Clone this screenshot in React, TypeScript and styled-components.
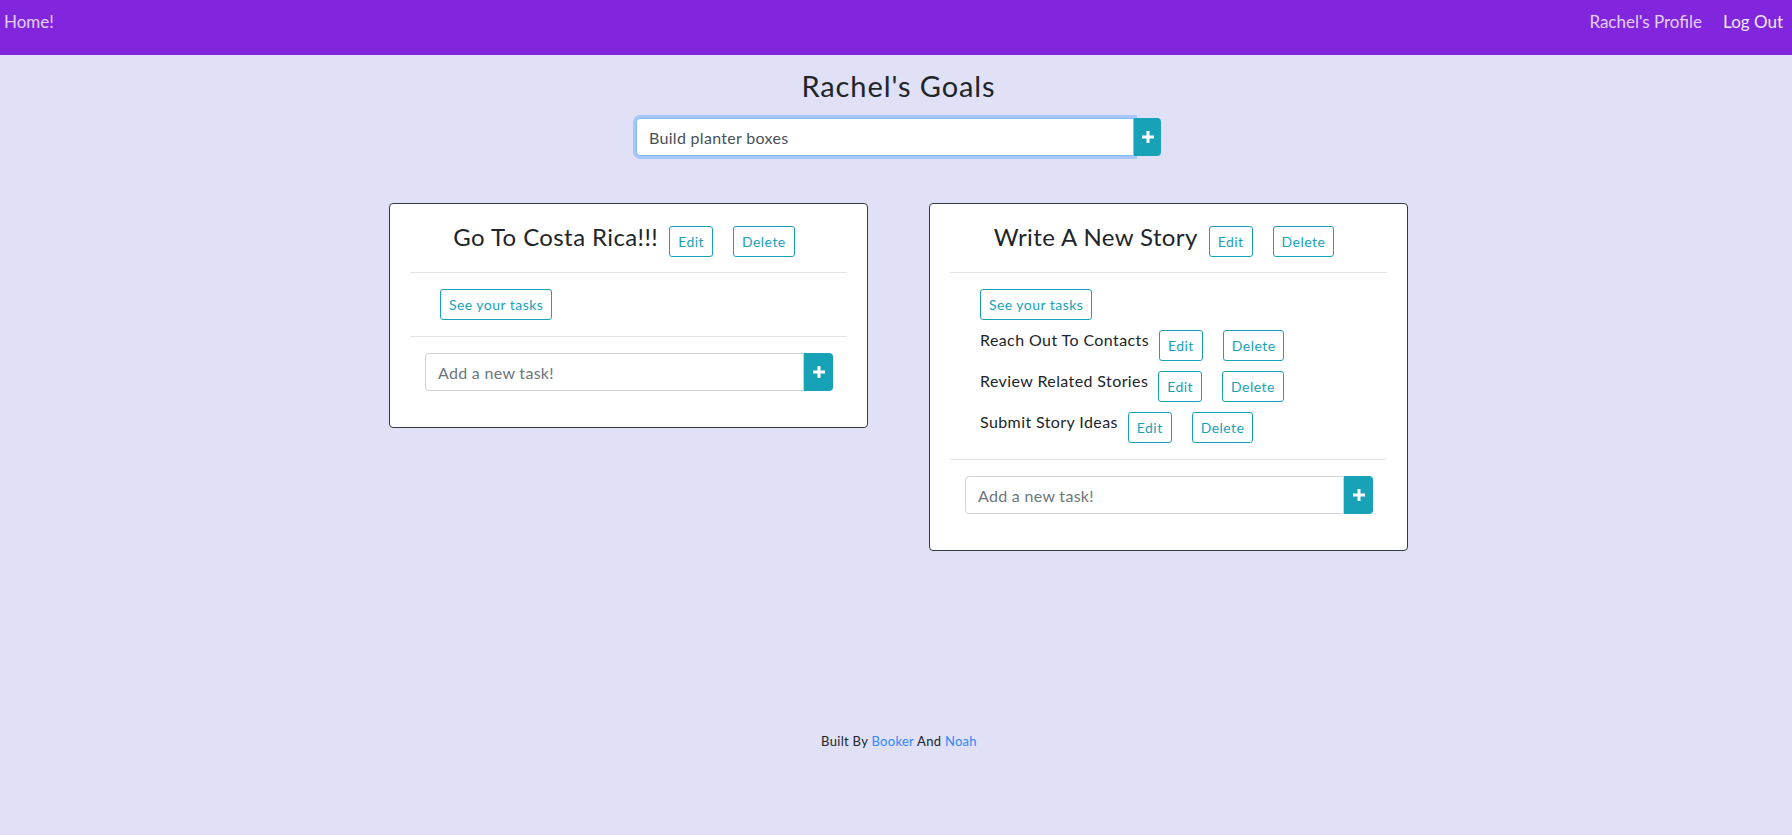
import React, { useEffect, useRef } from "react";
import styled, { createGlobalStyle } from "styled-components";

const GlobalStyle = createGlobalStyle`
  * { box-sizing: border-box; }
  body {
    margin: 0;
    background: #e0e1f7;
    font-family: Lato, "Open Sans", sans-serif;
    color: #212529;
  }
`;

const Page = styled.div`
  min-height: 835px;
  display: flex;
  flex-direction: column;
`;

const NavBar = styled.nav`
  height: 55px;
  background: #8226dd;
  display: flex;
  justify-content: space-between;
  align-items: flex-start;
  padding: 11px 9px 0 4px;
`;

const NavGroup = styled.div`
  display: flex;
  gap: 21px;
`;

const NavLink = styled.a<{ $bright?: boolean }>`
  font-size: 17px;
  line-height: 22px;
  color: ${(p) => (p.$bright ? "rgba(255,255,255,0.92)" : "rgba(255,255,255,0.8)")};
  text-decoration: none;
  cursor: pointer;
`;

const Header = styled.header`
  display: flex;
  flex-direction: column;
  align-items: center;
  padding-left: 5px;
  padding-top: 14px;
`;

const Title = styled.h1`
  margin: 0 0 15px;
  font-size: 29px;
  font-weight: 400;
  line-height: 34px;
  letter-spacing: 0.9px;
`;

const InputGroup = styled.div<{ $width: number }>`
  display: flex;
  width: ${(p) => p.$width}px;
  height: 38px;
`;

const TextInput = styled.input<{ $focused?: boolean }>`
  flex: 1;
  min-width: 0;
  height: 100%;
  padding: 6px 12px;
  font-family: inherit;
  font-size: 16px;
  letter-spacing: 0.3px;
  color: #495057;
  background: #fff;
  border: 1px solid ${(p) => (p.$focused ? "#80bdff" : "#ced4da")};
  border-radius: 4px 0 0 4px;
  outline: none;
  box-shadow: ${(p) => (p.$focused ? "0 0 0 3px rgba(0,123,255,0.25)" : "none")};
  caret-color: #212529;
  &::placeholder {
    color: #6c757d;
  }
`;

const AddButton = styled.button<{ $width: number }>`
  width: ${(p) => p.$width}px;
  height: 100%;
  border: none;
  background: #17a2b8;
  color: #fff;
  border-radius: 0 4px 4px 0;
  display: flex;
  align-items: center;
  justify-content: center;
  padding: 0;
  cursor: pointer;
`;

const Cards = styled.main`
  display: flex;
  justify-content: center;
  align-items: flex-start;
  gap: 61px;
  padding-left: 5px;
  margin-top: 47px;
`;

const Card = styled.section`
  width: 479px;
  background: #fff;
  border: 1px solid #343a40;
  border-radius: 4px;
  padding: 22px 20px 36px;
  display: flex;
  flex-direction: column;
`;

const CardHead = styled.div`
  display: flex;
  justify-content: center;
  align-items: center;
  padding-right: 9px;
  padding-bottom: 15px;
`;

const CardTitle = styled.h2`
  margin: 0 11px 0 0;
  font-size: 24px;
  font-weight: 400;
  line-height: 29px;
  letter-spacing: 0.4px;
  position: relative;
  top: -5px;
`;

const Rule = styled.hr`
  margin: 0;
  border: 0;
  border-top: 1px solid rgba(0, 0, 0, 0.1);
`;

const OutlineBtn = styled.button<{ $gap?: number }>`
  height: 31px;
  padding: 0 8px;
  margin-right: ${(p) => p.$gap ?? 0}px;
  border: 1px solid #17a2b8;
  background: transparent;
  color: #17a2b8;
  border-radius: 3px;
  font-family: inherit;
  font-size: 14px;
  letter-spacing: 0.45px;
  cursor: pointer;
  flex-shrink: 0;
`;

const TaskArea = styled.div`
  display: flex;
  flex-direction: column;
  align-items: flex-start;
  gap: 10px;
  padding: 16px 30px 16px;
`;

const TaskRow = styled.div`
  display: flex;
  align-items: flex-start;
`;

const TaskName = styled.span`
  font-size: 16px;
  line-height: 20px;
  letter-spacing: 0.4px;
  margin-right: 10px;
`;

const CardInputWrap = styled.div`
  padding: 16px 15px 0 15px;
`;

const Footer = styled.footer`
  margin-top: 181px;
  text-align: center;
  padding-left: 6px;
  font-size: 13px;
  line-height: 18px;
  letter-spacing: 0.3px;
`;

const FootLink = styled.a`
  color: #2f86ff;
  text-decoration: none;
`;

const Plus = () => (
  <svg width="12" height="12" viewBox="0 0 12 12">
    <path d="M4.5 0h3v4.5H12v3H7.5V12h-3V7.5H0v-3h4.5z" fill="#fff" />
  </svg>
);

type Goal = { title: string; tasks: string[] };

const goals: Goal[] = [
  { title: "Go To Costa Rica!!!", tasks: [] },
  {
    title: "Write A New Story",
    tasks: ["Reach Out To Contacts", "Review Related Stories", "Submit Story Ideas"],
  },
];

const GoalCard = ({ goal }: { goal: Goal }) => (
  <Card>
    <CardHead>
      <CardTitle>{goal.title}</CardTitle>
      <OutlineBtn $gap={20}>Edit</OutlineBtn>
      <OutlineBtn>Delete</OutlineBtn>
    </CardHead>
    <Rule />
    <TaskArea>
      <OutlineBtn>See your tasks</OutlineBtn>
      {goal.tasks.map((t) => (
        <TaskRow key={t}>
          <TaskName>{t}</TaskName>
          <OutlineBtn $gap={20}>Edit</OutlineBtn>
          <OutlineBtn>Delete</OutlineBtn>
        </TaskRow>
      ))}
    </TaskArea>
    <Rule />
    <CardInputWrap>
      <InputGroup $width={408}>
        <TextInput placeholder="Add a new task!" />
        <AddButton $width={29}>
          <Plus />
        </AddButton>
      </InputGroup>
    </CardInputWrap>
  </Card>
);

export default function App() {
  const ref = useRef<HTMLInputElement>(null);
  useEffect(() => {
    const el = ref.current;
    if (el) {
      el.focus();
      el.setSelectionRange(5, 5);
    }
  }, []);
  return (
    <Page>
      <GlobalStyle />
      <NavBar>
        <NavLink>Home!</NavLink>
        <NavGroup>
          <NavLink>Rachel's Profile</NavLink>
          <NavLink $bright>Log Out</NavLink>
        </NavGroup>
      </NavBar>
      <Header>
        <Title>Rachel's Goals</Title>
        <InputGroup $width={525}>
          <TextInput ref={ref} $focused defaultValue="Build planter boxes" />
          <AddButton $width={27}>
            <Plus />
          </AddButton>
        </InputGroup>
      </Header>
      <Cards>
        {goals.map((g) => (
          <GoalCard key={g.title} goal={g} />
        ))}
      </Cards>
      <Footer>
        Built By <FootLink>Booker</FootLink> And <FootLink>Noah</FootLink>
      </Footer>
    </Page>
  );
}
